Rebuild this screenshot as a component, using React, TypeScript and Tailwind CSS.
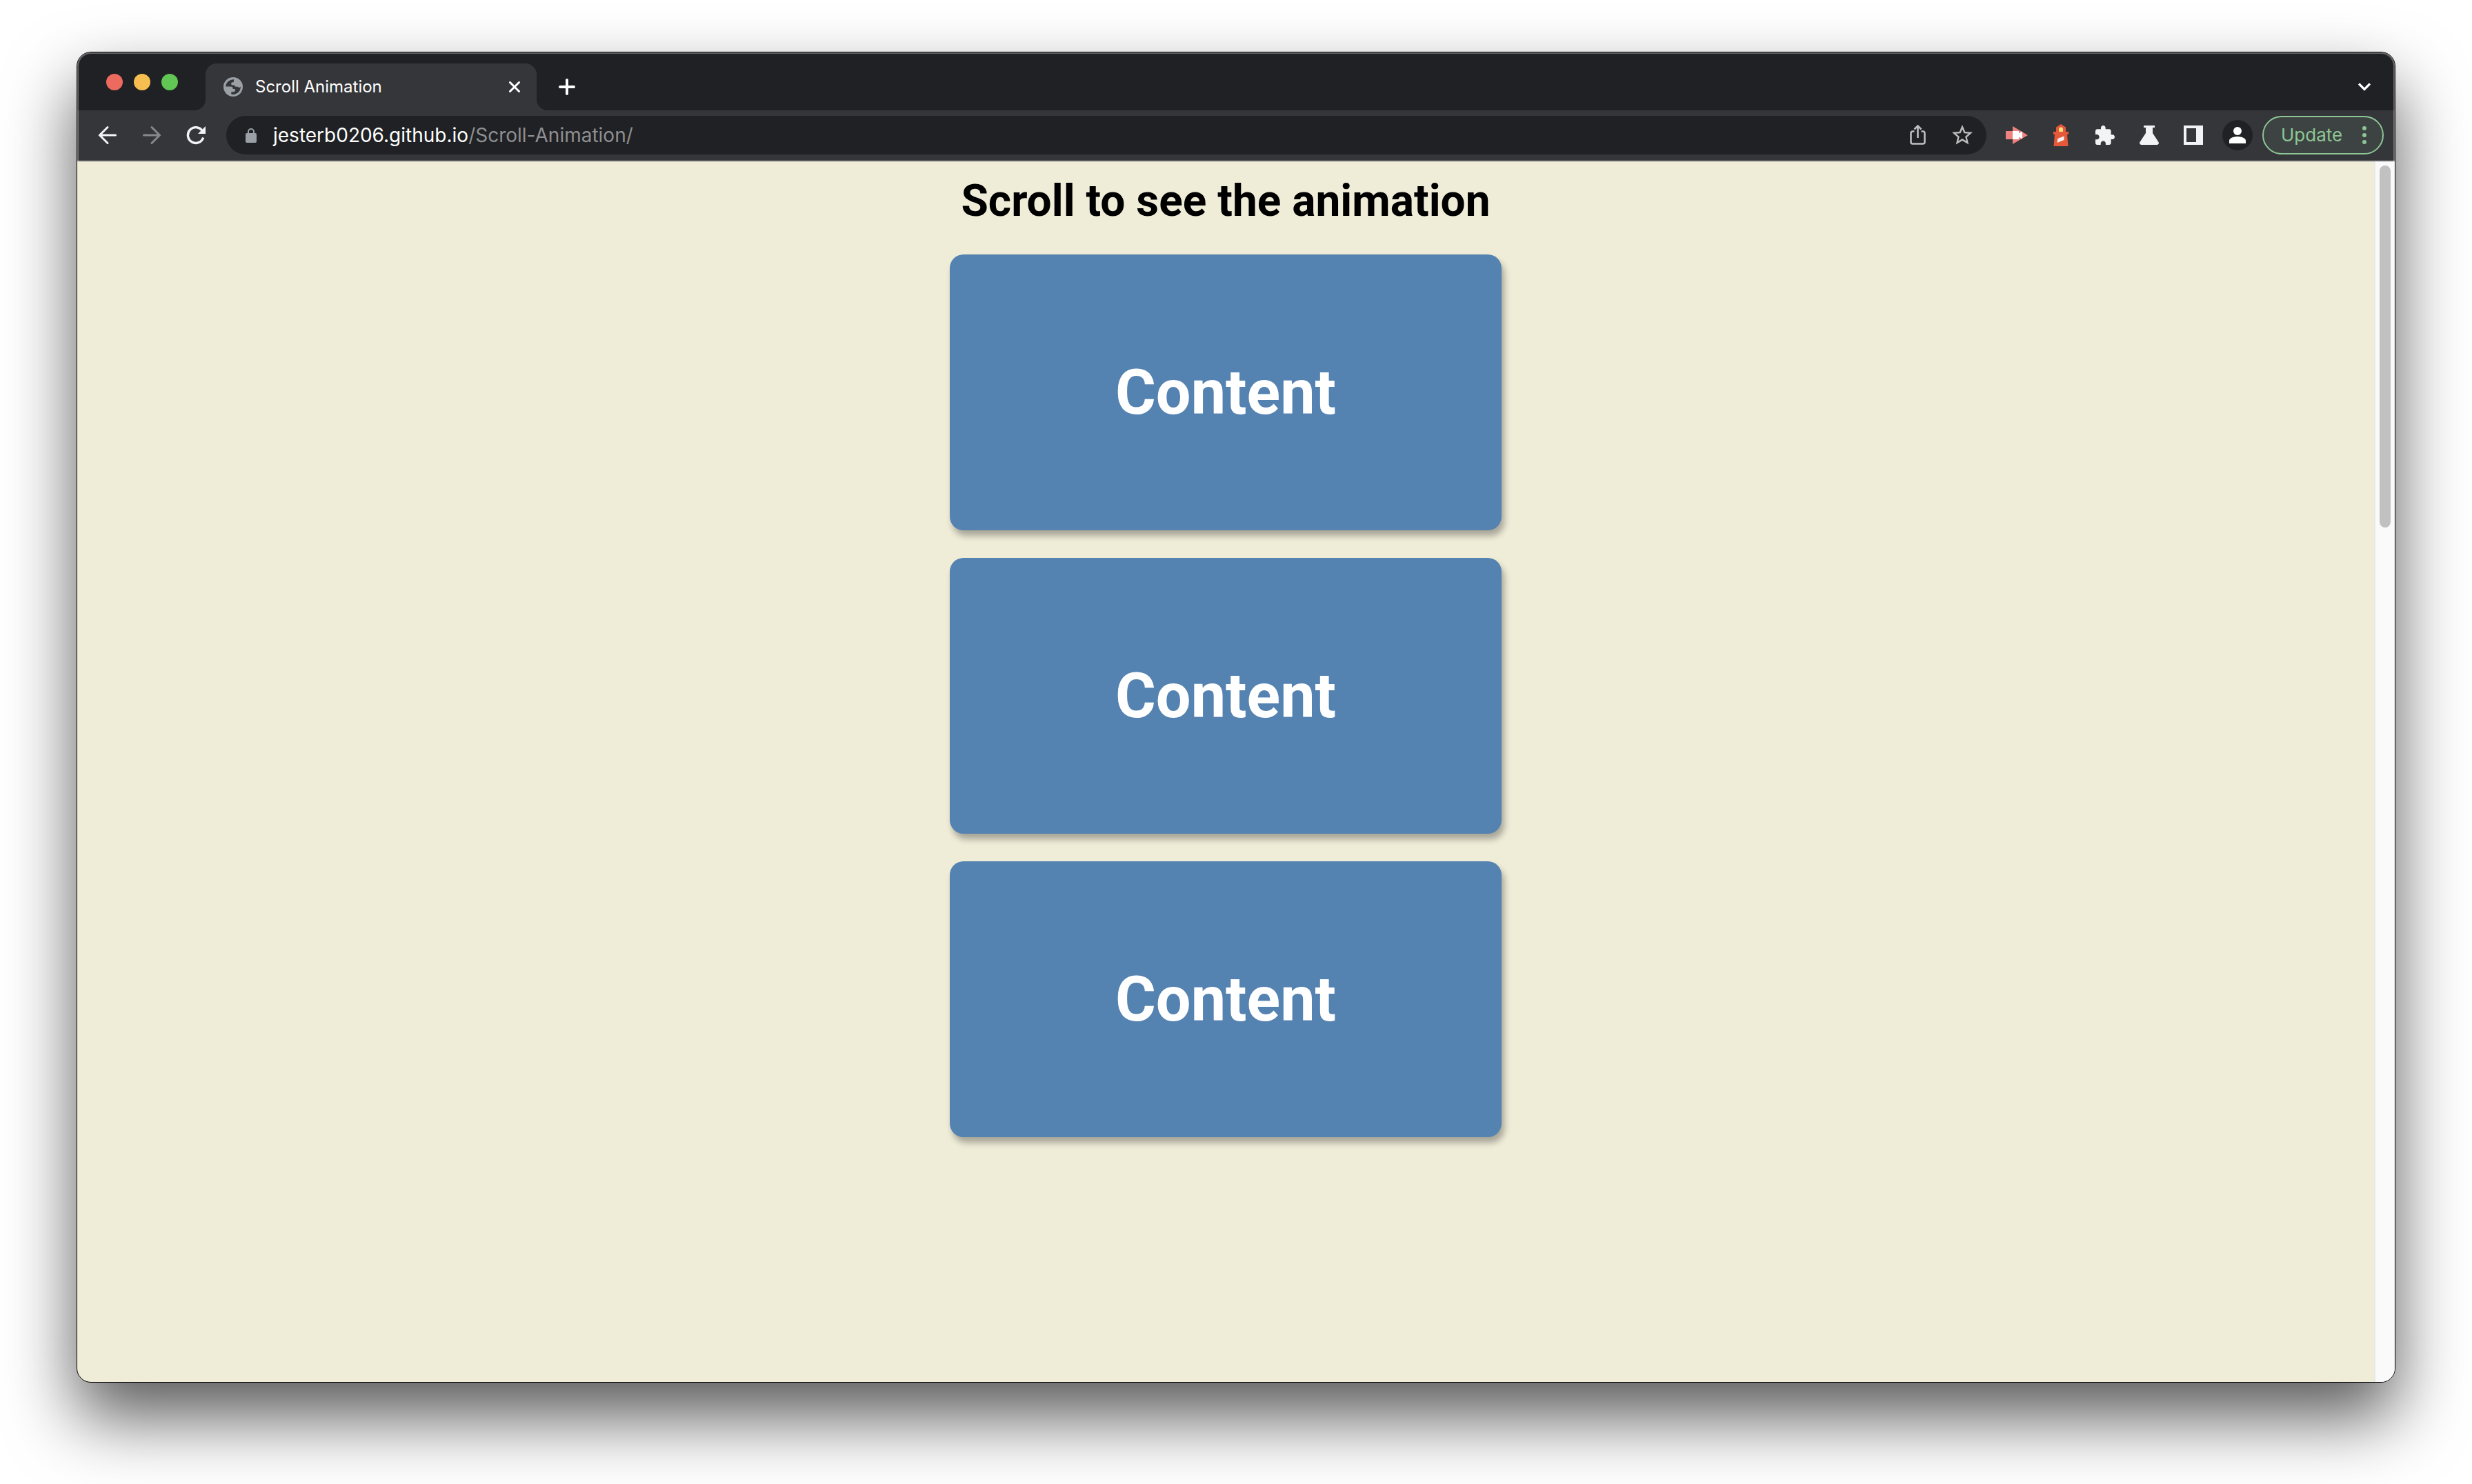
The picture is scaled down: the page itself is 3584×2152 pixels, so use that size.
import type { ReactNode } from "react";

function Icon({ label, className, children }: { label: string; className: string; children: ReactNode }) {
  return (
    <button type="button" aria-label={label} className={`flex shrink-0 items-center justify-center ${className}`}>
      {children}
    </button>
  );
}

function TabStrip() {
  return (
    <div className="flex h-[84px] items-end bg-[#202124]">
      <div className="flex h-[84px] w-[170px] shrink-0 items-center gap-4 pl-[42px] pt-[2px]">
        <button type="button" aria-label="Close window" className="size-6 rounded-full bg-[#ed6a5f]" />
        <button type="button" aria-label="Minimize window" className="size-6 rounded-full bg-[#f6be50]" />
        <button type="button" aria-label="Zoom window" className="size-6 rounded-full bg-[#62c655]" />
      </div>
      <div className="size-4 shrink-0 bg-[#35363a]">
        <div className="size-4 rounded-br-2xl bg-[#202124]" />
      </div>
      <div className="flex h-[68px] w-[480px] shrink-0 items-center rounded-t-2xl bg-[#35363a] pl-[26px] pr-6">
        <svg viewBox="0 0 28 28" className="size-7 shrink-0" aria-hidden="true">
          <circle cx="14" cy="14" r="14" fill="#9aa0a6" />
          <path
            fill="#35363a"
            d="M15 3.200A11 11 0 0 0 3.200 13.500H10C12.500 13.500 13.800 14.600 13.800 17H17V19C17 20.500 15.800 21.200 14.500 21.200H11.300V24.600A11 11 0 0 0 24.900 13.800C23.900 15.300 21.500 15.300 21 13.700H18C16.600 13.700 16.200 12.600 16.200 11.400H13C11.600 11.400 11.200 10.300 11.200 9.300C11.200 7.800 12.300 7.300 13.700 7.300C14.700 7.300 15 6.500 15 5.500Z"
          />
        </svg>
        <span className="ml-[18px] grow whitespace-nowrap text-[24px] leading-7 text-white">Scroll Animation</span>
        <Icon label="Close tab" className="size-4">
          <svg viewBox="0 0 16 16" className="size-4" fill="none" stroke="#fff" strokeWidth="3" strokeLinecap="round">
            <path d="M1.500 1.500L14.500 14.500M14.500 1.500L1.500 14.500" />
          </svg>
        </Icon>
      </div>
      <div className="size-4 shrink-0 bg-[#35363a]">
        <div className="size-4 rounded-bl-2xl bg-[#202124]" />
      </div>
      <div className="flex h-[68px] grow items-center justify-between pl-4 pr-[35px]">
        <Icon label="New tab" className="size-6">
          <svg viewBox="0 0 24 24" className="size-6" fill="none" stroke="#fff" strokeWidth="4" strokeLinecap="round">
            <path d="M12 2V22M2 12H22" />
          </svg>
        </Icon>
        <Icon label="Search tabs" className="h-3 w-[18px]">
          <svg viewBox="0 0 18 12" className="h-3 w-[18px]" fill="none" stroke="#fff" strokeWidth="3.200">
            <path d="M1 1.500L9 9.500L17 1.500" />
          </svg>
        </Icon>
      </div>
    </div>
  );
}

function Toolbar() {
  return (
    <div className="flex h-[74px] items-center border-b-2 border-[#5b5c60] bg-[#35363a] pl-6 pr-4">
      <Icon label="Back" className="size-10">
        <svg viewBox="0 0 28 28" className="size-7" fill="none" stroke="#f1f3f4" strokeWidth="3" strokeLinecap="round">
          <path d="M14 2.500L2.500 14L14 25.500M2.500 14H25.500" />
        </svg>
      </Icon>
      <Icon label="Forward" className="ml-6 size-10">
        <svg viewBox="0 0 28 28" className="size-7" fill="none" stroke="#86878a" strokeWidth="3" strokeLinecap="round">
          <path d="M14 2.500L25.500 14L14 25.500M25.500 14H2.500" />
        </svg>
      </Icon>
      <Icon label="Reload" className="ml-6 size-10">
        <svg viewBox="0 0 28 28" className="size-7" fill="none" stroke="#f1f3f4" strokeWidth="3.400">
          <path d="M23.500 8A11.400 11.400 0 1 0 24.700 17.500" />
          <path d="M28 1V12H17Z" fill="#f1f3f4" stroke="none" />
        </svg>
      </Icon>
      <div className="ml-6 flex h-14 grow items-center rounded-full bg-[#202124] pl-[27px] pr-5">
        <svg viewBox="0 0 18 22" className="h-[22px] w-[18px] shrink-0" aria-hidden="true">
          <path d="M5 10V6A4 4 0 0 1 13 6V10" fill="none" stroke="#9aa0a6" strokeWidth="2" />
          <rect x="1" y="8" width="16" height="14" rx="2" fill="#9aa0a6" />
        </svg>
        <a href="#address" className="ml-[23px] grow whitespace-nowrap text-[28px] leading-8 text-white">
          jesterb0206.github.io<span className="text-[#8e8f91]">/Scroll-Animation/</span>
        </a>
        <Icon label="Share this page" className="size-[30px]">
          <svg viewBox="0 0 30 30" className="size-[30px]" fill="none" stroke="#bdbebf" strokeWidth="2.600">
            <path d="M9.500 9.500H7A2.500 2.500 0 0 0 4.500 12V25A2.500 2.500 0 0 0 7 27.500H22A2.500 2.500 0 0 0 24.500 25V12A2.500 2.500 0 0 0 22 9.500H19.500M14.500 19V2M9.500 6.500L14.500 1.500L19.500 6.500" />
          </svg>
        </Icon>
        <Icon label="Bookmark this page" className="ml-[34px] size-[30px]">
          <svg viewBox="2 2 20 20" className="size-[30px]" fill="#bdbebf">
            <path d="M22 9.240l-7.190-.62L12 2 9.190 8.630 2 9.240l5.460 4.730L5.820 21 12 17.270 18.180 21l-1.630-7.030L22 9.240zM12 15.400l-3.760 2.270 1-4.280-3.320-2.880 4.380-.38L12 6.100l1.710 4.040 4.380.38-3.320 2.880 1 4.280L12 15.400z" />
          </svg>
        </Icon>
      </div>
      <div className="ml-7 flex shrink-0 items-center gap-8">
        <Icon label="Video extension" className="size-8">
          <svg viewBox="0 0 32 32" className="size-8">
            <path d="M0 10H10V3L32 16L10 29V22H0Z" fill="#ee827f" />
            <path d="M10 10H18V14L24 10.500V21.500L18 18V22H10Z" fill="#fff" />
            <path d="M10 10H19V22H10Z" fill="#fff" />
          </svg>
        </Icon>
        <Icon label="Lighthouse" className="size-8">
          <svg viewBox="0 0 32 32" className="size-8">
            <path d="M16 0L23 4.500V11H27V15H25L26.500 32H5.500L7 15H5V11H9V4.500Z" fill="#e5593a" />
            <path d="M13 11V7.500A3 3 0 0 1 19 7.500V11Z" fill="#fbe07a" />
            <path d="M11.500 21L20.500 17.500V23L10.500 27Z" fill="#f1f1f1" />
          </svg>
        </Icon>
        <Icon label="Extensions" className="size-8">
          <svg viewBox="2 1 21 21" className="size-7" fill="#f1f3f4">
            <path d="M20.500 11H19V7c0-1.100-.9-2-2-2h-4V3.500C13 2.120 11.880 1 10.500 1S8 2.120 8 3.500V5H4c-1.100 0-1.990.9-1.990 2v3.800H3.500c1.490 0 2.700 1.210 2.700 2.700s-1.210 2.700-2.700 2.700H2V20c0 1.100.9 2 2 2h3.800v-1.500c0-1.490 1.210-2.700 2.700-2.700 1.490 0 2.700 1.210 2.700 2.700V22H17c1.100 0 2-.9 2-2v-4h1.500c1.380 0 2.500-1.120 2.500-2.500S21.880 11 20.500 11z" />
          </svg>
        </Icon>
        <Icon label="Labs" className="size-8">
          <svg viewBox="0 0 28 28" className="size-7" fill="#f1f3f4">
            <path d="M6 0H22V3H19V11L27.500 24A2.600 2.600 0 0 1 25.500 28H2.500A2.600 2.600 0 0 1 .5 24L9 11V3H6Z" />
          </svg>
        </Icon>
        <Icon label="Side panel" className="size-8">
          <svg viewBox="0 0 28 28" className="size-7" fill="#f1f3f4">
            <path fillRule="evenodd" d="M0 0H28V28H0ZM4 4V24H18V4Z" />
          </svg>
        </Icon>
      </div>
      <Icon label="Profile" className="ml-[26px] size-11 rounded-full bg-[#202124]">
        <svg viewBox="0 0 24 24" className="size-6" fill="#fff">
          <circle cx="12" cy="6" r="6" />
          <path d="M0 24V20C0 16 7 14 12 14S24 16 24 20V24Z" />
        </svg>
      </Icon>
      <button
        type="button"
        className="ml-[14px] flex h-14 w-44 shrink-0 items-center justify-between rounded-full border-2 border-[#8ec695] bg-[#3d4242] pl-[25px] pr-[23px] text-[26px] leading-8 text-[#8ec695]"
      >
        Update
        <svg viewBox="0 0 6 26" className="h-[26px] w-[6px]" fill="#8ec695" aria-hidden="true">
          <circle cx="3" cy="3" r="3" />
          <circle cx="3" cy="13" r="3" />
          <circle cx="3" cy="23" r="3" />
        </svg>
      </button>
    </div>
  );
}

const boxes = ["Content", "Content", "Content"];

export default function App() {
  return (
    <div className="h-screen overflow-hidden bg-white px-[111px] pb-[147px] pt-[75px] font-['Inter',sans-serif]">
      <div className="h-full rounded-[21px] border border-black bg-[#efecd8] shadow-[0_50px_100px_rgba(0,0,0,0.65)]">
        <div className="relative flex h-full flex-col overflow-hidden rounded-[20px]">
          <TabStrip />
          <Toolbar />
          <div className="flex min-h-0 grow">
            <main className="flex grow flex-col items-center overflow-hidden pt-5 font-['Roboto',sans-serif]">
              <h1 className="text-[64px] font-bold leading-[75px] text-black">Scroll to see the animation</h1>
              <div className="mt-10 flex flex-col gap-10">
                {boxes.map((text, i) => (
                  <section
                    key={i}
                    className="flex h-[400px] w-[800px] items-center justify-center rounded-[20px] bg-[#5482b1] shadow-[4px_8px_10px_rgba(0,0,0,0.3)]"
                  >
                    <h2 className="text-[90px] font-bold text-white">{text}</h2>
                  </section>
                ))}
              </div>
            </main>
            <div className="w-[30px] shrink-0 border-l-2 border-[#e8e8e8] bg-[#fafafa] pl-[6px] pt-[6px]">
              <div className="h-[525px] w-4 rounded-full bg-[#c1c1c1]" />
            </div>
          </div>
          <div className="pointer-events-none absolute inset-x-0 top-0 h-[158px] rounded-t-[20px] border-x-2 border-t-2 border-white/30" />
        </div>
      </div>
    </div>
  );
}
